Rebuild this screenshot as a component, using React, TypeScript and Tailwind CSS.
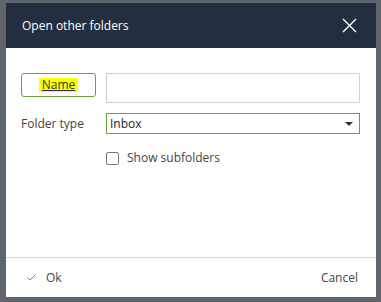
const font = { fontFamily: "'Open Sans', 'Liberation Sans', sans-serif" };

export default function App() {
  return (
    <div
      className="w-[381px] h-[302px] bg-[#5e656c] pt-[3px] pl-[6px] overflow-hidden"
      style={font}
    >
      <div className="w-[370px] h-[294px] bg-white flex flex-col">
        {/* header */}
        <div className="h-[45px] bg-[#232f3e] flex items-center justify-between pl-[16px] pr-[19px]">
          <span className="text-[12px] text-white">Open other folders</span>
          <svg width="15" height="15" viewBox="0 0 15 15">
            <path d="M1 1L14 14M14 1L1 14" stroke="#fff" strokeWidth="1.4" />
          </svg>
        </div>

        {/* body */}
        <div className="flex-1 pt-[25px] pl-[15px]">
          <div className="flex items-start">
            <button className="w-[75px] h-[24px] border border-[#6aa13c] rounded-[3px] flex items-center justify-center">
              <span className="bg-[#ffff00] px-[3px] text-[12px] text-[#333] underline leading-[14px]">
                Name
              </span>
            </button>
            <div className="ml-[10px] w-[254px] h-[30px] border border-[#d0d0d0]" />
          </div>

          <div className="flex items-center mt-[10px]">
            <span className="w-[85px] text-[12px] text-[#444]">Folder type</span>
            <div className="w-[254px] h-[21px] border border-[#6aa13c] flex items-center justify-between pl-[3px] pr-[6px]">
              <span className="text-[12px] text-[#222]">Inbox</span>
              <svg width="8" height="4" viewBox="0 0 8 4">
                <path d="M0 0H8L4 4Z" fill="#333" />
              </svg>
            </div>
          </div>

          <div className="flex items-center mt-[15px] ml-[85px]">
            <div className="w-[13px] h-[13px] border border-[#777] rounded-[2px]" />
            <span className="ml-[8px] text-[12px] text-[#444]">Show subfolders</span>
          </div>
        </div>

        {/* footer */}
        <div className="h-[40px] border-t border-[#d5d5d5] flex items-center justify-between pl-[21px] pr-[18px]">
          <div className="flex items-center">
            <svg width="9" height="7" viewBox="0 0 9 7">
              <path d="M0.5 3.5L3 6L8.5 0.5" stroke="#6aa13c" strokeWidth="1" fill="none" />
            </svg>
            <span className="ml-[10px] text-[12px] text-[#444]">Ok</span>
          </div>
          <span className="text-[12px] text-[#444]">Cancel</span>
        </div>
      </div>
    </div>
  );
}
